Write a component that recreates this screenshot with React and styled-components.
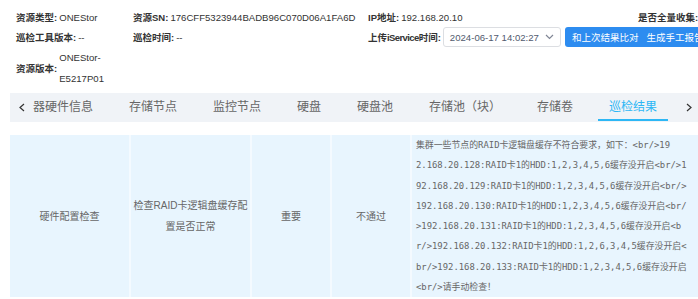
import styled, { createGlobalStyle } from "styled-components";

const GlobalStyle = createGlobalStyle`
  html, body {
    margin: 0;
    padding: 0;
    background: #fff;
    overflow: hidden;
  }
  body {
    font-family: "Liberation Sans", "Noto Sans CJK SC", sans-serif;
    color: #333;
  }
`;

const Page = styled.div`
  width: 698px;
  height: 299px;
  box-sizing: border-box;
  padding: 7px 0 0 10px;
  overflow: hidden;
`;

const InfoGrid = styled.div`
  display: grid;
  grid-template-columns: 117px 235px 270px 120px;
  grid-template-rows: 20px 20px 42px;
  padding-left: 6px;
`;

const InfoItem = styled.div`
  display: flex;
  align-items: center;
  grid-column: ${(p) => p.$span || "auto"};
  white-space: ${(p) => (p.$wrap ? "normal" : "nowrap")};
`;

const Label = styled.span`
  flex-shrink: 0;
  font-size: 9.5px;
  font-weight: bold;
  color: #333;
  margin-right: 2px;
`;

const Tight = styled.span`
  letter-spacing: -0.6px;
`;

const Value = styled.span`
  font-size: 9.6px;
  line-height: 21px;
  color: #333;
`;

const Picker = styled.div`
  display: flex;
  align-items: center;
  gap: 6px;
  height: 20px;
  box-sizing: border-box;
  padding: 0 6px;
  border: 1px solid #dcdee2;
  border-radius: 3px;
  font-size: 9.6px;
  color: #515a6e;
`;

const PickerIcon = styled.span`
  display: flex;
  color: #808695;
`;

const ButtonGroup = styled.div`
  display: flex;
  margin-left: 4px;
  height: 20px;
  background: #2d8cf0;
  border-radius: 3px 0 0 3px;
`;

const Button = styled.button`
  border: 0;
  background: transparent;
  color: #fff;
  font-family: inherit;
  font-size: 9.5px;
  padding: 0 4px;
  white-space: nowrap;
  &:first-child {
    padding-left: 7px;
  }
`;

const TabBar = styled.div`
  display: flex;
  height: 29px;
  margin-top: 4px;
  background: #f0f3f7;
`;

const Arrow = styled.div`
  flex-shrink: 0;
  width: ${(p) => p.$w}px;
  display: flex;
  align-items: center;
  justify-content: center;
  color: #333;
`;

const TabScroll = styled.div`
  flex: 1;
  overflow: hidden;
`;

const TabList = styled.div`
  display: flex;
  white-space: nowrap;
  transform: translateX(${(p) => -p.$offset}px);
`;

const Tab = styled.div`
  position: relative;
  padding: 0 18px;
  font-size: 12px;
  line-height: 29px;
  color: ${(p) => (p.$active ? "#2db7f5" : "#666")};
  &::after {
    content: "";
    display: ${(p) => (p.$active ? "block" : "none")};
    position: absolute;
    left: 7px;
    right: 7px;
    bottom: 1px;
    height: 2px;
    background: #2db7f5;
  }
`;

const Table = styled.div`
  display: grid;
  grid-template-columns: 119px 119px 78px 78px 1fr;
  column-gap: 2px;
  margin-top: 13px;
  background: #f4faff;
`;

const Cell = styled.div`
  display: flex;
  align-items: center;
  justify-content: center;
  text-align: center;
  padding: 0 1px;
  background: #e8f5fe;
  font-size: 10px;
  line-height: 21px;
  color: #666;
`;

const DetailCell = styled.div`
  background: #e8f5fe;
  padding: 0 4px;
  font-family: "DejaVu Sans Mono", "Noto Sans CJK SC", monospace;
  font-size: 8.9px;
  line-height: 20.3px;
  color: #666;
  white-space: nowrap;
  overflow: hidden;
`;

const Line = styled.div``;

const tabs = ["服务器硬件信息", "存储节点", "监控节点", "硬盘", "硬盘池", "存储池（块）", "存储卷", "巡检结果"];

const detail = [
  "集群一些节点的RAID卡逻辑盘缓存不符合要求，如下：<br/>19",
  "2.168.20.128:RAID卡1的HDD:1,2,3,4,5,6缓存没开启<br/>1",
  "92.168.20.129:RAID卡1的HDD:1,2,3,4,5,6缓存没开启<br/>",
  "192.168.20.130:RAID卡1的HDD:1,2,3,4,5,6缓存没开启<br/",
  ">192.168.20.131:RAID卡1的HDD:1,2,3,4,5,6缓存没开启<b",
  "r/>192.168.20.132:RAID卡1的HDD:1,2,6,3,4,5缓存没开启<",
  "br/>192.168.20.133:RAID卡1的HDD:1,2,3,4,5,6缓存没开启",
  "<br/>请手动检查！",
];

function Chevron({ dir }) {
  const pts = dir === "left" ? "5,1 1,4.5 5,8" : dir === "right" ? "1,1 5,4.5 1,8" : "1,1 4.5,4.5 8,1";
  const w = dir === "down" ? 9 : 6;
  const h = dir === "down" ? 6 : 9;
  return (
    <svg width={w} height={h} viewBox={`0 0 ${w} ${h}`}>
      <polyline points={pts} fill="none" stroke="currentColor" strokeWidth="1.2" />
    </svg>
  );
}

export default function App() {
  return (
    <>
      <GlobalStyle />
      <Page>
        <InfoGrid>
          <InfoItem>
            <Label>资源类型:</Label>
            <Value>ONEStor</Value>
          </InfoItem>
          <InfoItem>
            <Label>资源SN:</Label>
            <Value>176CFF5323944BADB96C070D06A1FA6D</Value>
          </InfoItem>
          <InfoItem>
            <Label>IP地址:</Label>
            <Value>192.168.20.10</Value>
          </InfoItem>
          <InfoItem>
            <Label>是否全量收集:</Label>
          </InfoItem>

          <InfoItem>
            <Label>巡检工具版本:</Label>
            <Value>--</Value>
          </InfoItem>
          <InfoItem>
            <Label>巡检时间:</Label>
            <Value>--</Value>
          </InfoItem>
          <InfoItem $span="span 2">
            <Label>
              上传<Tight>iService</Tight>时间:
            </Label>
            <Picker>
              2024-06-17 14:02:27
              <PickerIcon>
                <Chevron dir="down" />
              </PickerIcon>
            </Picker>
            <ButtonGroup>
              <Button>和上次结果比对</Button>
              <Button>生成手工报告</Button>
            </ButtonGroup>
          </InfoItem>

          <InfoItem $wrap>
            <Label>资源版本:</Label>
            <Value>ONEStor-E5217P01</Value>
          </InfoItem>
        </InfoGrid>

        <TabBar>
          <Arrow $w={23}>
            <Chevron dir="left" />
          </Arrow>
          <TabScroll>
            <TabList $offset={42}>
              {tabs.map((t) => (
                <Tab key={t} $active={t === "巡检结果"}>
                  {t}
                </Tab>
              ))}
            </TabList>
          </TabScroll>
          <Arrow $w={18}>
            <Chevron dir="right" />
          </Arrow>
        </TabBar>

        <Table>
          <Cell>硬件配置检查</Cell>
          <Cell>检查RAID卡逻辑盘缓存配置是否正常</Cell>
          <Cell>重要</Cell>
          <Cell>不通过</Cell>
          <DetailCell>
            {detail.map((l, i) => (
              <Line key={i}>{l}</Line>
            ))}
          </DetailCell>
        </Table>
      </Page>
    </>
  );
}
